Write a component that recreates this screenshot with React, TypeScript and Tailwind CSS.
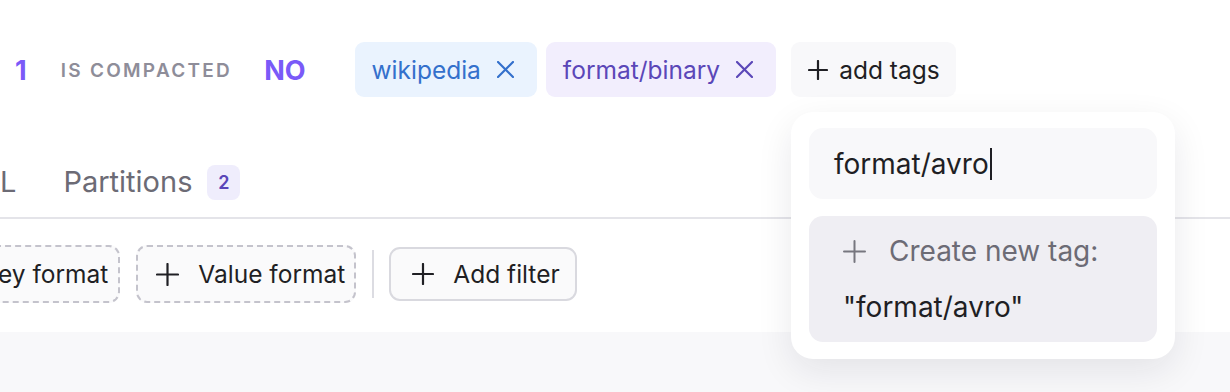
import type { ReactNode } from "react";

type IconProps = {
  size: number;
  className?: string;
  strokeWidth?: number;
};

function PlusGlyph({ size, className, strokeWidth = 2.2 }: IconProps) {
  return (
    <svg
      className={className}
      fill="none"
      height={size}
      stroke="currentColor"
      strokeLinecap="round"
      strokeWidth={strokeWidth}
      viewBox={`0 0 ${size} ${size}`}
      width={size}
    >
      <line x1={size / 2} x2={size / 2} y1={1} y2={size - 1} />
      <line x1={1} x2={size - 1} y1={size / 2} y2={size / 2} />
    </svg>
  );
}

function CloseGlyph({ size, className, strokeWidth = 2.2 }: IconProps) {
  return (
    <svg
      className={className}
      fill="none"
      height={size}
      stroke="currentColor"
      strokeLinecap="round"
      strokeWidth={strokeWidth}
      viewBox={`0 0 ${size} ${size}`}
      width={size}
    >
      <line x1={1} x2={size - 1} y1={1} y2={size - 1} />
      <line x1={size - 1} x2={1} y1={1} y2={size - 1} />
    </svg>
  );
}

function Tag({ label, tone }: { label: string; tone: "blue" | "purple" }) {
  const styles =
    tone === "blue"
      ? "bg-[#eaf3fe] text-[#3470cc]"
      : "bg-[#f2eefd] text-[#5b47b8]";

  return (
    <span
      className={`inline-flex h-[55px] items-center gap-4 rounded-[9px] pl-[17px] pr-[23px] text-[24.5px] ${styles}`}
    >
      <span className="pt-[2px]">{label}</span>
      <CloseGlyph size={17} />
    </span>
  );
}

function FilterButton({
  children,
  dashed,
  className = "",
}: {
  children: ReactNode;
  dashed?: boolean;
  className?: string;
}) {
  return (
    <button
      className={`flex items-center gap-[19px] rounded-[11px] border-2 bg-[#fafafb] text-[24.5px] text-[#1f1f24] ${
        dashed ? "h-[58px] border-dashed border-[#c4c3cc]" : "h-[54px] border-[#d9d9df]"
      } ${className}`}
      type="button"
    >
      {children}
    </button>
  );
}

export default function App() {
  return (
    <div
      className="relative h-[392px] w-[1230px] overflow-hidden bg-white"
      style={{ fontFamily: "Inter, 'Noto Sans', sans-serif" }}
    >
      <div className="flex h-[139px] items-start pt-[42px]">
        <div className="flex h-[55px] items-center">
          <span className="ml-[15px] pt-[3px] text-[27px] font-bold text-[#7a5af8]">1</span>
          <span className="ml-[34px] pt-[3px] text-[19px] font-semibold uppercase tracking-[0.12em] text-[#8e8d99]">
            Is compacted
          </span>
          <span className="ml-[32px] pt-[3px] text-[27px] font-bold text-[#7a5af8]">NO</span>
          <div className="ml-[49px] flex items-center gap-[9px]">
            <Tag label="wikipedia" tone="blue" />
            <Tag label="format/binary" tone="purple" />
          </div>
          <button
            className="ml-[15px] flex h-[55px] items-center gap-[11px] rounded-[9px] bg-[#f8f8fa] pl-[17px] pr-[16px] text-[24.5px] text-[#1f1f24]"
            type="button"
          >
            <PlusGlyph size={20} />
            <span className="pt-[2px]">add tags</span>
          </button>
        </div>
      </div>

      <div className="flex h-[80px] items-center border-b-2 border-[#e4e4e9] pt-[8px]">
        <span className="text-[29px] text-[#6c6b75]">L</span>
        <span className="ml-[47px] text-[29px] text-[#6c6b75]">Partitions</span>
        <span className="ml-[15px] flex h-[35px] w-[33px] items-center justify-center rounded-[8px] bg-[#efedfc] text-[18px] font-semibold text-[#5a46b8]">
          2
        </span>
      </div>

      <div className="flex h-[113px] items-start pt-[26px]">
        <div className="flex items-center">
          <FilterButton className="-ml-[16px] pl-[12px] pr-[10px]" dashed>
            ey format
          </FilterButton>
          <FilterButton className="ml-4 pl-[18px] pr-[9px]" dashed>
            <PlusGlyph size={23} />
            Value format
          </FilterButton>
          <div className="ml-[16px] h-[48px] w-[2px] bg-[#dcdce2]" />
          <FilterButton className="ml-[15px] gap-[17px] pl-[21px] pr-[15px]">
            <PlusGlyph size={22} />
            Add filter
          </FilterButton>
        </div>
      </div>

      <div className="h-[60px] bg-[#f8f8fa]" />

      <div className="absolute left-[791px] top-[112px] flex w-[384px] flex-col gap-[17px] rounded-[22px] bg-white p-[18px] pb-[17px] pt-[16px] shadow-[0_12px_36px_rgba(20,20,40,0.09)]">
        <div className="flex h-[71px] items-center rounded-[14px] bg-[#f8f8fa] pl-[25px] text-[28px] text-[#1f1f24]">
          format/avro
          <span className="ml-[1px] h-[32px] w-[2px] bg-[#1f1f24]" />
        </div>
        <div className="flex h-[126px] flex-col justify-center gap-[14px] rounded-[14px] bg-[#efeef3] pl-[34px] text-[28px]">
          <div className="flex items-center gap-[23px] text-[#6c6b75]">
            <PlusGlyph className="text-[#77767f]" size={23} strokeWidth={2} />
            Create new tag:
          </div>
          <div className="text-[#1f1f24]">"format/avro"</div>
        </div>
      </div>
    </div>
  );
}
